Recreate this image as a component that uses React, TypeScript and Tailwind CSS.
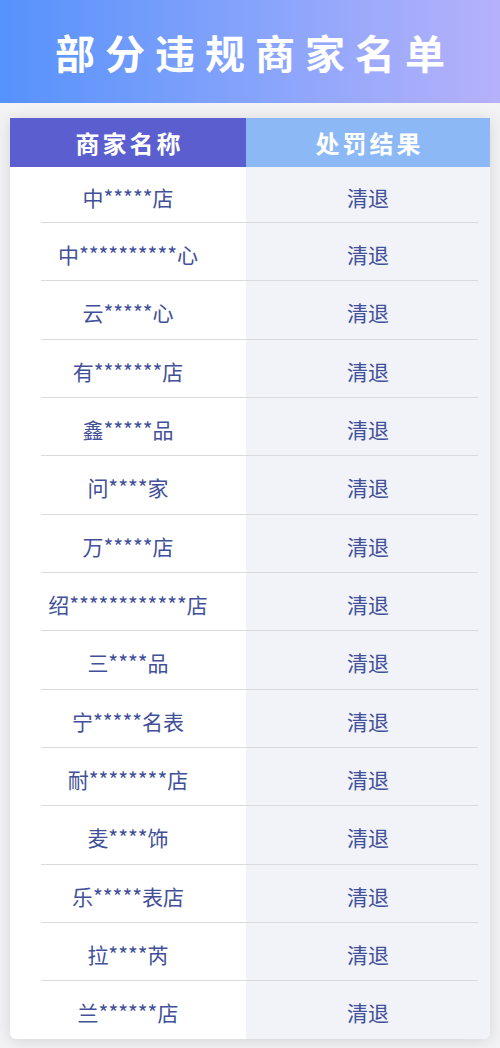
import React from "react";

const rows = [
  "中*****店",
  "中**********心",
  "云*****心",
  "有*******店",
  "鑫*****品",
  "问****家",
  "万*****店",
  "绍************店",
  "三****品",
  "宁*****名表",
  "耐********店",
  "麦****饰",
  "乐*****表店",
  "拉****芮",
  "兰******店",
];

export default function App() {
  return (
    <div
      className="w-[500px] h-[1048px] bg-[#f3f3f5] overflow-hidden"
      style={{ fontFamily: '"Noto Sans CJK SC", "Noto Sans", sans-serif' }}
    >
      <div className="h-[103px] bg-gradient-to-r from-[#5592fb] via-[#85a3fb] to-[#b6b1fb] flex items-center justify-center">
        <h1 className="text-white text-[40px] font-bold tracking-[10px] pl-[10px] leading-none">
          部分违规商家名单
        </h1>
      </div>
      <div className="px-[10px] pt-[15px]">
        <div className="bg-white rounded-b-[6px] shadow-[0_2px_16px_rgba(0,0,0,0.13)] overflow-hidden relative">
          <div className="grid grid-cols-[236px_1fr] h-[49px]">
            <div className="bg-[#5b5ecf] flex items-center justify-center text-white text-[24px] font-bold tracking-[3px] pl-[3px]">
              商家名称
            </div>
            <div className="bg-[#8cb9f6] flex items-center justify-center text-white text-[24px] font-bold tracking-[3px] pl-[3px]">
              处罚结果
            </div>
          </div>
          <div className="relative">
            <div className="absolute top-0 bottom-0 right-0 w-[244px] bg-[#f1f3f9]" />
            {rows.map((name, i) => (
              <div
                key={i}
                className={`relative grid grid-cols-[236px_1fr] ${
                  i === 0 ? "h-[56px]" : i === rows.length - 1 ? "h-[57.7px]" : "h-[58.33px]"
                }`}
              >
                <div className="flex items-center justify-center pt-[5px] text-[21px] text-[#415099]">
                  {name}
                </div>
                <div className="flex items-center justify-center pt-[5px] text-[21px] text-[#415099]">
                  清退
                </div>
                {i < rows.length - 1 && (
                  <div className="absolute bottom-0 left-[31px] right-[12px] h-px bg-[#d9dade]" />
                )}
              </div>
            ))}
          </div>
        </div>
      </div>
    </div>
  );
}
